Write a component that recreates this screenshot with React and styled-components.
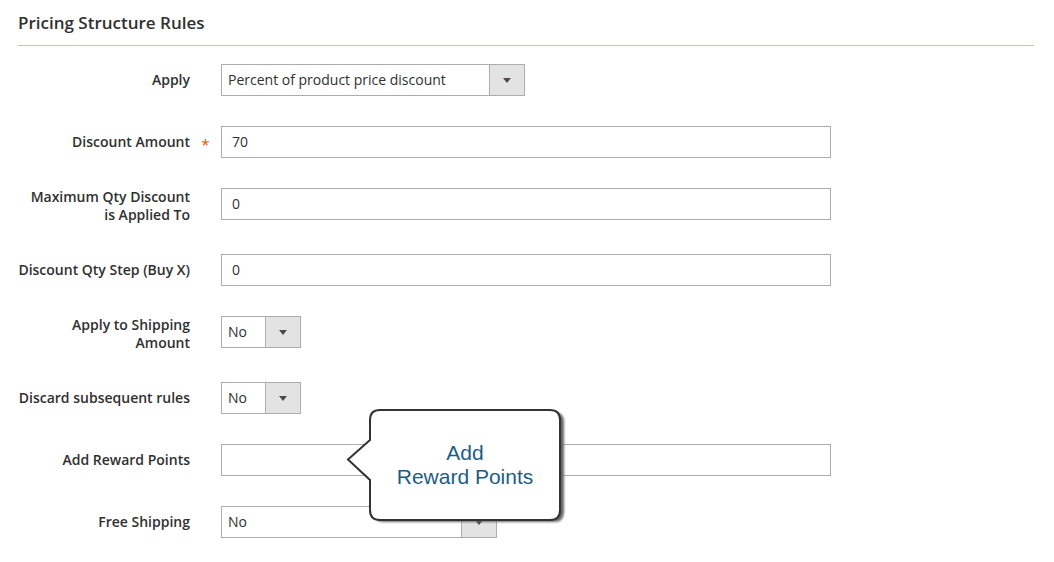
import styled, { createGlobalStyle } from "styled-components";

const GlobalStyle = createGlobalStyle`
  body {
    margin: 0;
    background: #fff;
    font-family: "Open Sans", "Liberation Sans", sans-serif;
    color: #303030;
  }
`;

const fields = [
  { label: "Apply", kind: "select", value: "Percent of product price discount", width: 304 },
  { label: "Discount Amount", kind: "input", value: "70", required: true },
  { label: ["Maximum Qty Discount", "is Applied To"], kind: "input", value: "0" },
  { label: "Discount Qty Step (Buy X)", kind: "input", value: "0" },
  { label: ["Apply to Shipping", "Amount"], kind: "select", value: "No", width: 80 },
  { label: "Discard subsequent rules", kind: "select", value: "No", width: 80 },
  { label: "Add Reward Points", kind: "input", value: "" },
  { label: "Free Shipping", kind: "select", value: "No", width: 276 },
];

export default function App() {
  return (
    <Page>
      <GlobalStyle />
      <Title>Pricing Structure Rules</Title>
      <Form>
        {fields.map((f, i) => {
          const multi = Array.isArray(f.label);
          return (
            <Row key={i}>
              <LabelCell>
                <Label $multi={multi}>
                  {multi ? f.label.map((l) => <div key={l}>{l}</div>) : f.label}
                </Label>
                <Star>{f.required ? "*" : ""}</Star>
              </LabelCell>
              {f.kind === "input" ? (
                <TextInput>{f.value}</TextInput>
              ) : (
                <Select $width={f.width}>
                  <SelectValue>{f.value}</SelectValue>
                  <ArrowBox>
                    <Arrow />
                  </ArrowBox>
                </Select>
              )}
            </Row>
          );
        })}
      </Form>
      <Callout>
        <svg width="228" height="124" viewBox="0 0 228 124">
          <defs>
            <filter id="blur" x="-10%" y="-10%" width="120%" height="120%">
              <feGaussianBlur stdDeviation="1" />
            </filter>
          </defs>
          <path
            d="M28 34 L28 14 Q28 4 38 4 L208 4 Q218 4 218 14 L218 104 Q218 114 208 114 L38 114 Q28 114 28 104 L28 74 L6 53 Z"
            fill="#666"
            filter="url(#blur)"
          />
          <path
            d="M24 32 L24 12 Q24 2 34 2 L204 2 Q214 2 214 12 L214 102 Q214 112 204 112 L34 112 Q24 112 24 102 L24 72 L2 51.5 Z"
            fill="#fff"
            stroke="#333"
            strokeWidth="2"
            strokeLinejoin="miter"
          />
        </svg>
        <CalloutText>
          Add
          <br />
          Reward Points
        </CalloutText>
      </Callout>
    </Page>
  );
}

const Page = styled.div`
  position: relative;
  padding: 12px 20px 0 18px;
`;

const Title = styled.div`
  font-size: 17px;
  font-weight: 600;
  line-height: 22px;
  color: #303030;
  padding-bottom: 11px;
  border-bottom: 1px solid #cac3b4;
`;

const Form = styled.div`
  display: flex;
  flex-direction: column;
  gap: 30px;
  margin-top: 18px;
`;

const Row = styled.div`
  display: flex;
  align-items: flex-start;
`;

const LabelCell = styled.div`
  display: flex;
  width: 203px;
  flex: none;
`;

const Label = styled.div`
  flex: 1;
  text-align: right;
  font-size: 14px;
  font-weight: 600;
  line-height: 18px;
  padding-top: ${(p) => (p.$multi ? "0" : "7px")};
  color: #303030;
  white-space: nowrap;
`;

const Star = styled.span`
  width: 31px;
  text-align: center;
  color: #eb5202;
  font-size: 15px;
  line-height: 18px;
  padding-top: 9px;
`;

const TextInput = styled.div`
  box-sizing: border-box;
  width: 610px;
  height: 32px;
  border: 1px solid #adadad;
  padding: 0 10px;
  font-size: 14px;
  line-height: 30px;
  color: #303030;
`;

const Select = styled.div`
  box-sizing: border-box;
  display: flex;
  width: ${(p) => p.$width}px;
  height: 32px;
  border: 1px solid #adadad;
  font-size: 14px;
  line-height: 30px;
`;

const SelectValue = styled.div`
  flex: 1;
  padding-left: 6px;
  white-space: nowrap;
  overflow: hidden;
`;

const ArrowBox = styled.div`
  width: 34px;
  flex: none;
  background: #e3e3e3;
  border-left: 1px solid #adadad;
  display: flex;
  align-items: center;
  justify-content: center;
`;

const Arrow = styled.span`
  width: 0;
  height: 0;
  border-left: 4px solid transparent;
  border-right: 4px solid transparent;
  border-top: 5px solid #514943;
`;

const Callout = styled.div`
  position: absolute;
  left: 346px;
  top: 408px;
  width: 228px;
  height: 124px;
  svg {
    display: block;
  }
`;

const CalloutText = styled.div`
  position: absolute;
  left: 24px;
  top: 2px;
  width: 190px;
  height: 110px;
  display: flex;
  flex-direction: column;
  justify-content: center;
  text-align: center;
  font-family: "Liberation Sans", Arial, sans-serif;
  font-size: 21px;
  line-height: 24px;
  color: #1c5d87;
`;
